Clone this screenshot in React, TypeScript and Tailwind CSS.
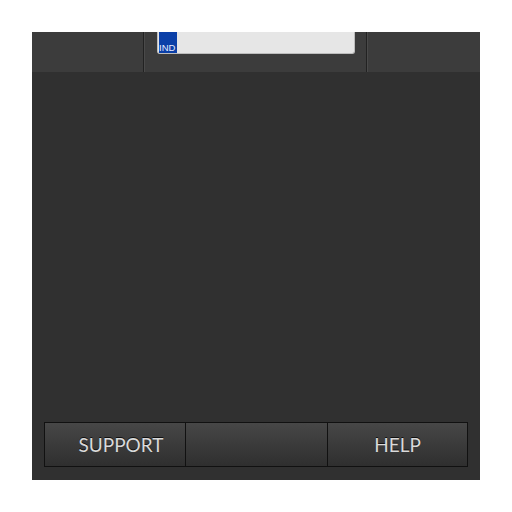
export default function App() {
  return (
    <div className="w-[512px] h-[512px] bg-white p-8">
      <div className="flex h-full w-full flex-col bg-[#303030]">
        <div className="flex h-[40px] bg-[#3c3c3c]">
          <div className="w-[111px]" />
          <div className="w-[1px] bg-[#222]" />
          <div className="w-[1px] bg-[#4a4a4a]" />
          <div className="flex w-[221px] justify-start pl-[12px]">
            <div className="flex h-[22px] w-[198px] rounded-b-[3px] border-x border-b border-[#bdbdbd] bg-[#e6e6e6] pl-[1px]">
              <div className="flex h-[21px] w-[18px] items-end bg-[#0b40a8] pb-[1px]">
                <span className="text-[9.5px] leading-none text-[#e8ecff] [font-family:'Liberation_Sans',sans-serif]">IND</span>
              </div>
            </div>
          </div>
          <div className="w-[1px] bg-[#222]" />
          <div className="w-[1px] bg-[#4a4a4a]" />
          <div className="flex-1" />
        </div>
        <div className="flex-1" />
        <div className="px-[12px] pb-[13px]">
          <div className="flex h-[45px] border border-[#111] bg-[#111] [font-family:'Lato',sans-serif] text-[19px] text-[#dadada] [text-shadow:0_-1px_0_#111]">
            <div className="flex w-[140px] items-center justify-center bg-gradient-to-b from-[#474747] to-[#2f2f2f] pl-[12px] pt-[1px]">SUPPORT</div>
            <div className="w-[1px]" />
            <div className="w-[141px] bg-gradient-to-b from-[#474747] to-[#2f2f2f]" />
            <div className="w-[1px]" />
            <div className="flex flex-1 items-center justify-center bg-gradient-to-b from-[#474747] to-[#2f2f2f] pt-[1px]">HELP</div>
          </div>
        </div>
      </div>
    </div>
  );
}
